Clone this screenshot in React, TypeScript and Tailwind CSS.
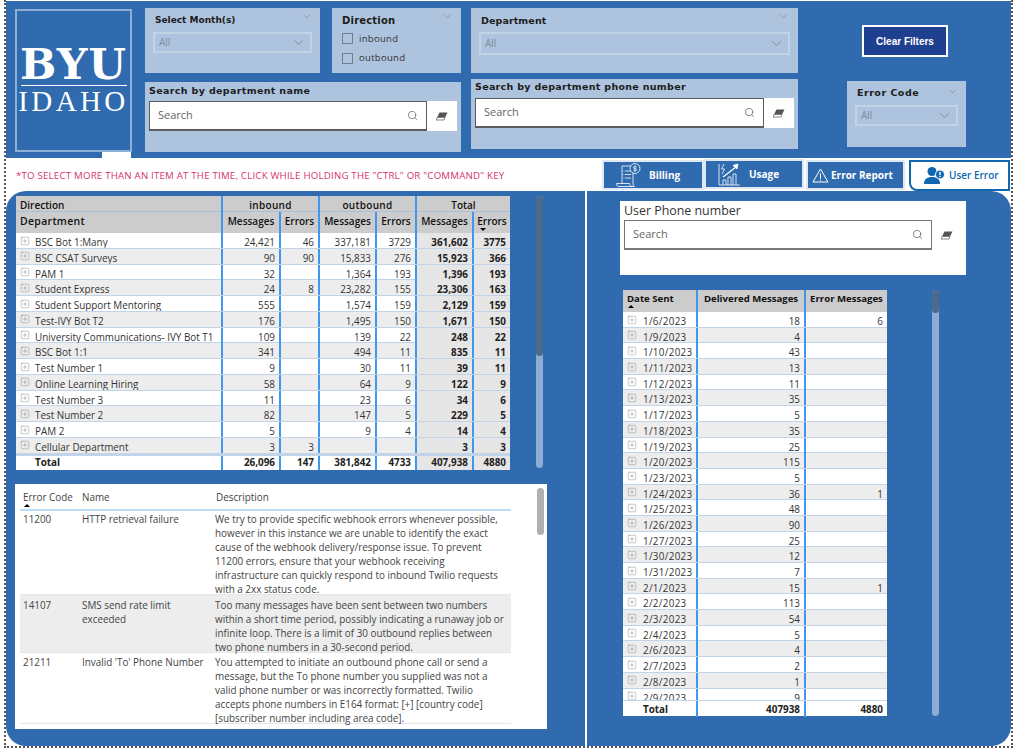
import { Search, ChevronDown, SquarePlus } from "lucide-react";

const sans = "font-['Open_Sans','Noto_Sans',sans-serif]";
const heavy = "font-['DejaVu_Sans',sans-serif] font-bold text-[#1c1c1c]";
const cell = "pt-[3px] leading-[12px]";

const deptRows = [
  ["BSC Bot 1:Many", "24,421", "46", "337,181", "3729", "361,602", "3775"],
  ["BSC CSAT Surveys", "90", "90", "15,833", "276", "15,923", "366"],
  ["PAM 1", "32", "", "1,364", "193", "1,396", "193"],
  ["Student Express", "24", "8", "23,282", "155", "23,306", "163"],
  ["Student Support Mentoring", "555", "", "1,574", "159", "2,129", "159"],
  ["Test-IVY Bot T2", "176", "", "1,495", "150", "1,671", "150"],
  ["University Communications- IVY Bot T1", "109", "", "139", "22", "248", "22"],
  ["BSC Bot 1:1", "341", "", "494", "11", "835", "11"],
  ["Test Number 1", "9", "", "30", "11", "39", "11"],
  ["Online Learning Hiring", "58", "", "64", "9", "122", "9"],
  ["Test Number 3", "11", "", "23", "6", "34", "6"],
  ["Test Number 2", "82", "", "147", "5", "229", "5"],
  ["PAM 2", "5", "", "9", "4", "14", "4"],
  ["Cellular Department", "3", "3", "", "", "3", "3"],
];

const dateRows = [
  ["1/6/2023", "18", "6"],
  ["1/9/2023", "4", ""],
  ["1/10/2023", "43", ""],
  ["1/11/2023", "13", ""],
  ["1/12/2023", "11", ""],
  ["1/13/2023", "35", ""],
  ["1/17/2023", "5", ""],
  ["1/18/2023", "35", ""],
  ["1/19/2023", "25", ""],
  ["1/20/2023", "115", ""],
  ["1/23/2023", "5", ""],
  ["1/24/2023", "36", "1"],
  ["1/25/2023", "48", ""],
  ["1/26/2023", "90", ""],
  ["1/27/2023", "25", ""],
  ["1/30/2023", "12", ""],
  ["1/31/2023", "7", ""],
  ["2/1/2023", "15", "1"],
  ["2/2/2023", "113", ""],
  ["2/3/2023", "54", ""],
  ["2/4/2023", "5", ""],
  ["2/6/2023", "4", ""],
  ["2/7/2023", "2", ""],
  ["2/8/2023", "1", ""],
  ["2/9/2023", "9", ""],
];

const errorRows = [
  {
    code: "11200",
    name: "HTTP retrieval failure",
    extra: "h-[84px] pt-px",
    lines: [
      "We try to provide specific webhook errors whenever possible,",
      "however in this instance we are unable to identify the exact",
      "cause of the webhook delivery/response issue. To prevent",
      "11200 errors, ensure that your webhook receiving",
      "infrastructure can quickly respond to inbound Twilio requests",
      "with a 2xx status code.",
    ],
  },
  {
    code: "14107",
    name: "SMS send rate limit exceeded",
    extra: "h-[58px] pt-[3px] bg-[#ededed]",
    lines: [
      "Too many messages have been sent between two numbers",
      "within a short time period, possibly indicating a runaway job or",
      "infinite loop. There is a limit of 30 outbound replies between",
      "two phone numbers in a 30-second period.",
    ],
  },
  {
    code: "21211",
    name: "Invalid 'To' Phone Number",
    extra: "h-[71px] pt-[2px]",
    lines: [
      "You attempted to initiate an outbound phone call or send a",
      "message, but the To phone number you supplied was not a",
      "valid phone number or was incorrectly formatted. Twilio",
      "accepts phone numbers in E164 format: [+] [country code]",
      "[subscriber number including area code].",
    ],
  },
];

const Dropdown = ({ h = "h-[21px]" }: { h?: string }) => (
  <div className={`${h} border-2 border-[#c3d3e6] flex items-center justify-between px-1 text-[10px] text-[#7f8c9b] ${sans}`}>
    All
    <ChevronDown size={15} strokeWidth={1} className="text-[#5f6b78]" />
  </div>
);

const SearchBox = ({ border = "border-[#5c5c5c]" }: { border?: string }) => (
  <div className={`flex-1 h-[30px] bg-white border ${border} border-b-2 flex items-center justify-between pl-2 pr-2 text-[11px] text-[#666] ${sans}`}>
    Search
    <Search size={11} strokeWidth={1.5} className="text-[#555]" />
  </div>
);

const EraserIcon = () => (
  <svg width="12" height="9" viewBox="0 0 12 9">
    <path d="M3.500.5h8l-2.500 5h-8z" fill="#555" />
    <path d="M1 5.500h8L8 8H0z" fill="white" stroke="#555" strokeWidth="0.7" />
  </svg>
);

const Plus = () => <SquarePlus size={10} strokeWidth={1} className="text-[#7d7d7d] shrink-0 -mt-[3px]" />;

const Billing = () => (
  <svg width="25" height="24" viewBox="0 0 25 24" fill="none" stroke="white" strokeWidth="0.8">
    <path d="M6 3h11v17c0 2 .5 3.500 1.500 3.500H3c-1.500 0-2.500-1-2.500-3h13c0 1.500 1 3 2.500 3" />
    <path d="M6 3v17" />
    <path d="M9 8h6M9 11.500h6M9 15h6" />
    <path d="M7.500 8h.8M7.500 11.500h.8M7.500 15h.8" />
    <circle cx="19" cy="5.500" r="5" fill="#306bb0" />
    <path d="M20.500 4c-.8-1-3-.6-3 .7s3 .8 3 2-2.200 1.700-3 .7M19 2.500v6" />
  </svg>
);

const Usage = () => (
  <svg width="22" height="23" viewBox="0 0 22 23" fill="none" stroke="white" strokeWidth="0.8">
    <path d="M1 1v21h21" />
    <path d="M5 22v-5h3v5M10 22v-8h3v8M15 22v-11h3v11" />
    <path d="M5 14L18 4" strokeWidth="1.200" />
    <path d="M15 2.500l5-1.500-1 5z" fill="white" />
    <path d="M6 1L3.500 6h3L4 11" />
  </svg>
);

const Warning = () => (
  <svg width="17" height="15" viewBox="0 0 17 15" fill="none" stroke="white" strokeWidth="1">
    <path d="M8.500 1L16 14H1z" />
    <path d="M8.500 5.500v5M8.500 11.500v1.200" />
  </svg>
);

const UserAlert = () => (
  <svg width="21" height="17" viewBox="0 0 21 17" fill="#1067b0">
    <circle cx="8" cy="4.500" r="4.500" />
    <path d="M0 17c0-5 3-7 8-7s8 2 8 7z" />
    <circle cx="16" cy="7.500" r="4.500" stroke="white" />
    <rect x="15.300" y="4.800" width="1.400" height="3.200" fill="white" />
    <rect x="15.300" y="8.800" width="1.400" height="1.400" fill="white" />
  </svg>
);

const DeptTable = () => {
  const cols = "grid grid-cols-[205px_58px_39px_57px_40px_57px_38px]";
  const left = "border-l-2 border-[#3f97ee]";
  return (
    <div className={`w-[494px] h-[274px] flex flex-col text-[9.900px] text-[#333] ${sans}`}>
      <div className="bg-[#cccccc] text-[#111] font-semibold text-[10px]">
        <div className={`${cols} h-[16px] border-b border-[#a9bfd8] leading-[18px]`}>
          <div className="pl-1">Direction</div>
          <div className={`col-span-2 text-center tracking-[0.300px] ${left}`}>inbound</div>
          <div className={`col-span-2 text-center tracking-[0.300px] ${left}`}>outbound</div>
          <div className={`col-span-2 text-center ${left}`}>Total</div>
        </div>
        <div className={`${cols} h-[21px] leading-[18px]`}>
          <div className="pl-1 text-[10.500px] tracking-[0.300px]">Department</div>
          {["Messages", "Errors", "Messages", "Errors", "Messages"].map((t, i) => (
            <div key={i} className={`text-center ${left}`}>{t}</div>
          ))}
          <div className={`relative text-center ${left}`}>
            Errors
            <span className="absolute left-[6px] top-[16px] w-0 h-0 border-x-[3px] border-x-transparent border-t-[3px] border-t-black" />
          </div>
        </div>
      </div>
      <div className="flex-1 overflow-hidden">
        {deptRows.map((r, i) => (
          <div key={r[0]} className={`${cols} h-[15.770px] border-b border-[#c4d4e8] ${i % 2 ? "bg-[#ededed]" : "bg-white"}`}>
            <div className={`flex items-center gap-[5px] pl-1 whitespace-nowrap overflow-hidden ${cell}`}>
              <Plus />
              {r[0]}
            </div>
            {r.slice(1).map((v, j) => (
              <div key={j} className={`text-right pr-1 ${cell} ${left} ${j >= 4 ? "font-bold text-[#222] bg-[#e6e6e6]" : ""}`}>{v}</div>
            ))}
          </div>
        ))}
      </div>
      <div className={`${cols} h-[16px] leading-[12px] bg-white font-bold text-[#222] border-t-2 border-[#c4d4e8]`}>
        <div className="pl-[19px]">Total</div>
        {["26,096", "147", "381,842", "4733", "407,938", "4880"].map((v, i) => (
          <div key={i} className={`text-right pr-1 ${left} ${i >= 4 ? "bg-[#e6e6e6]" : ""}`}>{v}</div>
        ))}
      </div>
    </div>
  );
};

const ErrorTable = () => (
  <div className={`relative w-[532px] h-[245px] bg-white pl-[5px] pt-[6px] text-[9.900px] text-[#444] overflow-hidden ${sans}`}>
    <div className="grid grid-cols-[59px_134px_298px] border-b-2 border-[#bcdcf8] h-[21px] w-[491px]">
      {["Error Code", "Name", "Description"].map((t) => (
        <div key={t} className="pl-[3px] relative">
          {t}
          {t === "Error Code" && <span className="absolute left-[4px] top-[14px] w-0 h-0 border-x-[3px] border-x-transparent border-b-[3px] border-b-black" />}
        </div>
      ))}
    </div>
    {errorRows.map((r) => (
      <div key={r.code} className={`grid grid-cols-[59px_134px_298px] w-[491px] leading-[14px] border-b border-[#e6e6e6] ${r.extra}`}>
        <div className="pl-[3px]">{r.code}</div>
        <div className="pl-[3px] pr-2">{r.name}</div>
        <div className="pl-[2px] whitespace-nowrap">
          {r.lines.map((l) => (
            <div key={l}>{l}</div>
          ))}
        </div>
      </div>
    ))}
    <div className="absolute right-[3px] top-[4px] w-[7px] h-[47px] rounded bg-[#b0b0b0]" />
  </div>
);

const DateTable = () => {
  const cols = "grid grid-cols-[73px_108px_83px]";
  const left = "border-l-2 border-[#3f97ee]";
  return (
    <div className={`w-[264px] h-[426px] flex flex-col text-[9.900px] text-[#333] bg-white ${sans}`}>
      <div className={`${cols} h-[22px] bg-[#cccccc] text-[#111] font-bold text-[9.600px] leading-[17px]`}>
        <div className="relative pl-[4px] whitespace-nowrap">
          Date Sent
          <span className="absolute left-[5px] top-[15px] w-0 h-0 border-x-[3px] border-x-transparent border-b-[3px] border-b-black" />
        </div>
        <div className={`text-center whitespace-nowrap ${left}`}>Delivered Messages</div>
        <div className={`text-center whitespace-nowrap ${left}`}>Error Messages</div>
      </div>
      <div className="flex-1 overflow-hidden">
        {dateRows.map((r, i) => (
          <div key={r[0]} className={`${cols} h-[15.700px] border-b border-[#c4d4e8] ${i % 2 ? "bg-[#ededed]" : "bg-white"}`}>
            <div className={`flex items-center gap-[6px] pl-[4px] tracking-[0.300px] ${cell}`}>
              <Plus />
              {r[0]}
            </div>
            <div className={`text-right pr-1 ${cell} ${left}`}>{r[1]}</div>
            <div className={`text-right pr-1 ${cell} ${left}`}>{r[2]}</div>
          </div>
        ))}
      </div>
      <div className={`${cols} h-[16px] leading-[16px] font-bold text-[#222] bg-white border-t border-[#c4d4e8]`}>
        <div className="pl-[20px]">Total</div>
        <div className={`text-right pr-1 ${left}`}>407938</div>
        <div className={`text-right pr-1 ${left}`}>4880</div>
      </div>
    </div>
  );
};

const TabBox = ({ children, className = "" }: { children: React.ReactNode; className?: string }) => (
  <div className={`h-[30px] bg-[#306bb0] border-2 border-[#dfe9f5] flex items-center text-white text-[10px] font-bold ${sans} ${className}`}>
    {children}
  </div>
);

export default function App() {
  return (
    <div className="w-[1022px] h-[754px] bg-white overflow-hidden pl-[4px] pb-[6px]">
      <div className="w-[1009px] h-[748px] border-x-2 border-b-2 border-dotted border-[#555] flex flex-col">
        {/* filter bar */}
        <div className="h-[157px] mt-px bg-[#306bb0] flex pl-[9px] pt-[7px] shrink-0">
          <div className="relative w-[117px] h-[143px] border-2 border-[#8fb0d6] flex flex-col items-center pt-[36px] text-white mt-px">
            <div className="font-['DejaVu_Serif',serif] font-bold text-[43px] leading-[34px] tracking-[1px]">BYU</div>
            <div className="w-[106px] h-px bg-white mt-[4px]" />
            <div className="font-['Liberation_Serif',serif] text-[29px] leading-[30px] tracking-[3.400px]">IDAHO</div>
            <div className="absolute left-[85px] top-[141px] w-[29px] h-[7px] bg-white" />
          </div>

          <div className="ml-[13px] w-[316px] flex flex-col gap-[9px]">
            <div className="flex gap-[12px]">
              <div className="relative w-[175px] h-[65px] bg-[#adc3de] px-[8px] pt-[7px]">
                <div className={`${heavy} text-[9px] pl-[2px] leading-[11px] mb-[6px]`}>Select Month(s)</div>
                <Dropdown />
                <ChevronDown size={11} strokeWidth={1} className="absolute right-[8px] top-[3px] text-[#5f6b78]" />
              </div>
              <div className="relative w-[129px] h-[65px] bg-[#adc3de] pl-[10px] pt-[7px]">
                <div className={`${heavy} text-[10px] tracking-[0.200px] leading-[11px] mb-[3px]`}>Direction</div>
                {["inbound", "outbound"].map((t) => (
                  <div key={t} className={`flex items-center gap-[6px] h-[19.500px] text-[9.500px] text-[#333] tracking-[0.300px] ${sans}`}>
                    <span className="w-[11px] h-[11px] border border-[#6f7f90]" />
                    {t}
                  </div>
                ))}
                <ChevronDown size={11} strokeWidth={1} className="absolute right-[8px] top-[3px] text-[#5f6b78]" />
              </div>
            </div>
            <div className="h-[70px] bg-[#adc3de] px-[4px] pt-[3px]">
              <div className={`${heavy} text-[9.500px] tracking-[0.350px] leading-[12px] mb-[4px]`}>Search by department name</div>
              <div className="flex h-[30px]">
                <SearchBox />
                <div className="w-[30px] bg-white flex items-center justify-center"><EraserIcon /></div>
              </div>
            </div>
          </div>

          <div className="ml-[10px] w-[327px] flex flex-col gap-[6px]">
            <div className="relative h-[65px] bg-[#adc3de] px-[8px] pt-[7px]">
              <div className={`${heavy} text-[9.500px] tracking-[0.100px] pl-[2px] leading-[11px] mb-[6px]`}>Department</div>
              <Dropdown h="h-[23px]" />
              <ChevronDown size={11} strokeWidth={1} className="absolute right-[9px] top-[3px] text-[#5f6b78]" />
            </div>
            <div className="h-[70px] bg-[#adc3de] pl-[4px] pr-[4px] pt-[2px]">
              <div className={`${heavy} text-[9.500px] tracking-[0.300px] leading-[12px] mb-[5px]`}>Search by department phone number</div>
              <div className="flex h-[30px]">
                <SearchBox />
                <div className="w-[30px] bg-white flex items-center justify-center"><EraserIcon /></div>
              </div>
            </div>
          </div>

          <div className="ml-[49px] w-[119px] flex flex-col items-end">
            <div className="mt-[17px] mr-[18px] w-[86px] h-[32px] bg-[#1f3f8f] border-2 border-white flex items-center justify-center text-white text-[10px] font-bold font-['Liberation_Sans',sans-serif]">
              Clear Filters
            </div>
            <div className="relative mt-[24px] w-[119px] h-[66px] bg-[#adc3de] px-[8px] pt-[6px]">
              <div className={`${heavy} text-[9.500px] tracking-[0.500px] pl-[2px] leading-[11px] mb-[7px]`}>Error Code</div>
              <Dropdown />
              <ChevronDown size={11} strokeWidth={1} className="absolute right-[8px] top-[5px] text-[#5f6b78]" />
            </div>
          </div>
        </div>

        {/* note and tabs */}
        <div className="h-[33px] flex items-start shrink-0">
          <div className={`mt-[11px] ml-[10px] w-[586px] text-[9.700px] tracking-[0.200px] text-[#d6336c] whitespace-nowrap ${sans}`}>
            *TO SELECT MORE THAN AN ITEM AT THE TIME, CLICK WHILE HOLDING THE "CTRL" OR "COMMAND" KEY
          </div>
          <TabBox className="mt-[2px] w-[102px] pl-[12px] gap-[8px]"><Billing />Billing</TabBox>
          <TabBox className="mt-px w-[100px] pl-[12px] gap-[9px]"><Usage />Usage</TabBox>
          <TabBox className="mt-[2px] ml-[2px] w-[99px] pl-[4px] gap-[2px]"><Warning />Error Report</TabBox>
          <div className={`mt-[2px] ml-[4px] w-[101px] h-[31px] bg-white border-2 border-[#1067b0] rounded-bl-lg flex items-center pl-[13px] gap-[4px] text-[#1067b0] text-[10px] font-semibold ${sans}`}>
            <UserAlert />User Error
          </div>
        </div>

        {/* main panels */}
        <div className="flex-1 flex gap-[2px] min-h-0">
          <div className="relative w-[579px] bg-[#306bb0] rounded-l-[20px] pl-[9px] pt-[5px] flex flex-col gap-[14px]">
            <div className="ml-px"><DeptTable /></div>
            <div className="absolute left-[530px] top-[5px] w-[7px] h-[272px] rounded bg-[#8fadd3]">
              <div className="h-[160px] rounded bg-[#4d6a8a]" />
            </div>
            <ErrorTable />
          </div>
          <div className="relative flex-1 bg-[#306bb0] rounded-r-[20px] pt-[10px]">
            <div className="ml-[33px] w-[346px] h-[74px] bg-white px-[4px] pt-[1px]">
              <div className={`text-[12.400px] leading-[17px] text-[#333] ${sans}`}>User Phone number</div>
              <div className="flex h-[30px] mt-px">
                <SearchBox border="border-[#777]" />
                <div className="w-[30px] flex items-center justify-center"><EraserIcon /></div>
              </div>
            </div>
            <div className="ml-[36px] mt-[15px]"><DateTable /></div>
            <div className="absolute left-[345px] top-[99px] w-[7px] h-[426px] rounded bg-[#8fadd3]">
              <div className="h-[23px] rounded bg-[#4d6a8a]" />
            </div>
          </div>
        </div>
      </div>
    </div>
  );
}
